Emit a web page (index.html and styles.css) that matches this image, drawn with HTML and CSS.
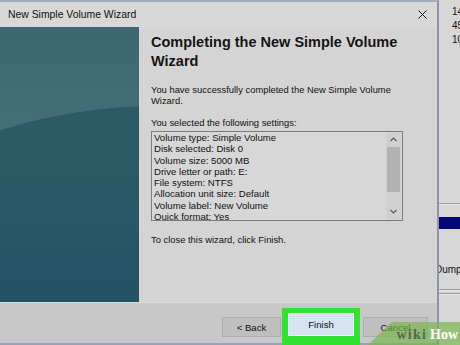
FILE: index.html
```html
<!DOCTYPE html>
<html lang="en">
<head>
  <meta charset="UTF-8" />
  <meta name="viewport" content="width=device-width, initial-scale=1.0" />
  <title>New Simple Volume Wizard</title>
  <link rel="stylesheet" href="styles.css">
</head>
<body>
  <div class="window">
    <div class="titlebar">
      <span>New Simple Volume Wizard</span>
      <svg class="close" width="9" height="9" viewBox="0 0 9 9">
        <path d="M0.5 0.5 L8.5 8.5 M8.5 0.5 L0.5 8.5" stroke="#1a1a1a" stroke-width="1" fill="none" />
      </svg>
    </div>

    <div class="main">
      <div class="side"></div>
      <div class="content">
        <h1>Completing the New Simple Volume Wizard</h1>
        <p>You have successfully completed the New Simple Volume Wizard.</p>
        <p class="label">You selected the following settings:</p>

        <div class="listbox">
          <div class="lines">
            <div>Volume type: Simple Volume</div>
            <div>Disk selected: Disk 0</div>
            <div>Volume size: 5000 MB</div>
            <div>Drive letter or path: E:</div>
            <div>File system: NTFS</div>
            <div>Allocation unit size: Default</div>
            <div>Volume label: New Volume</div>
            <div>Quick format: Yes</div>
          </div>
          <div class="scrollbar">
            <div class="arrow up">
              <svg width="7" height="5" viewBox="0 0 7 5"><path d="M0.5 4 L3.5 1 L6.5 4" stroke="#555" stroke-width="1.1" fill="none" /></svg>
            </div>
            <div class="thumb"></div>
            <div class="track"></div>
            <div class="arrow down">
              <svg width="7" height="5" viewBox="0 0 7 5"><path d="M0.5 1 L3.5 4 L6.5 1" stroke="#555" stroke-width="1.1" fill="none" /></svg>
            </div>
          </div>
        </div>

        <p class="closing">To close this wizard, click Finish.</p>
      </div>
    </div>

    <div class="footer">
      <button class="btn back">&lt; Back</button>
      <div class="highlight">
        <button class="btn finish">Finish</button>
      </div>
      <button class="btn cancel">Cancel</button>
    </div>
  </div>

  <div class="behind">
    <div class="nums">
      <div>14</div>
      <div>45</div>
      <div>10</div>
    </div>
    <div class="rule first"></div>
    <div class="selected"></div>
    <div class="dump">Dump</div>
    <div class="rule second"></div>
    <div class="rule third"></div>
  </div>

  <div class="wikihow"><span class="wiki">wiki</span><span class="how">How</span></div>
</body>
</html>
```

FILE: styles.css
```css
body {
  margin: 0;
  width: 460px;
  height: 345px;
  overflow: hidden;
  display: flex;
  position: relative;
  background-color: #d5d5d5;
  color: #111;
  font-family: 'Liberation Sans', Arial, sans-serif;
}

.window {
  width: 439px;
  flex: none;
  display: flex;
  flex-direction: column;
  box-sizing: border-box;
  border-top: 2px solid #a3acbe;
  border-right: 2px solid #8e97a9;
  border-bottom: 2px solid #9aa3b6;
  background-color: #d4d4d4;
  position: relative;
  z-index: 1;
}

.titlebar {
  height: 25px;
  flex: none;
  display: flex;
  align-items: center;
  justify-content: space-between;
  padding: 0 10px 0 8px;
  font-size: 10.4px;
  background-color: #d8d8d8;
}

.main {
  height: 275px;
  flex: none;
  display: flex;
}

.side {
  width: 139px;
  flex: none;
  background:
    linear-gradient(rgba(0, 0, 0, 0) 45%, rgba(18, 70, 96, 0.35)),
    radial-gradient(ellipse 300px 142px at 170px 220px, #2c5a66 99.5%, rgba(0, 0, 0, 0) 100%),
    linear-gradient(#3c6770, #44707a 45%, #3a666f);
}

.content {
  flex: 1;
  padding: 6px 30px 0 12px;
}

h1 {
  margin: 0;
  font-size: 14.5px;
  line-height: 19px;
  font-weight: bold;
  color: #141414;
}

p {
  margin: 13px 0 0;
  font-size: 9.4px;
  line-height: 11px;
}

.label {
  margin-top: 11px;
}

.listbox {
  margin-top: 3px;
  width: 252px;
  height: 90px;
  box-sizing: border-box;
  border: 1px solid #7d7d7d;
  background-color: #d7d7d7;
  display: flex;
}

.lines {
  flex: 1;
  overflow: hidden;
  padding-left: 2px;
  font-size: 9.6px;
  line-height: 11.3px;
}

.scrollbar {
  width: 15px;
  margin-right: 1px;
  display: flex;
  flex-direction: column;
  align-items: center;
  background-color: #d1d1d1;
}

.arrow {
  width: 100%;
  display: flex;
  align-items: center;
  justify-content: center;
}

.arrow.up {
  height: 15px;
}

.arrow.down {
  height: 17px;
}

.thumb {
  width: 13px;
  height: 45px;
  background-color: #b2b2b2;
}

.track {
  flex: 1;
}

.closing {
  margin-top: 13px;
}

.footer {
  height: 41px;
  flex: none;
  display: flex;
  align-items: flex-start;
  justify-content: flex-end;
  background-color: #c8c8c8;
  box-shadow: inset 0 1px 0 #d9d9d9;
}

.btn {
  margin-top: 15px;
  height: 20px;
  padding: 0;
  font-family: 'Liberation Sans', Arial, sans-serif;
  font-size: 9.6px;
  color: #111;
  background-color: #bfbfbf;
  border: 1px solid #adadad;
}

.back {
  width: 59px;
}

.highlight {
  margin: 6px 0 0 1px;
  width: 78px;
  height: 37px;
  box-sizing: border-box;
  padding: 5px 6px 0;
  background-color: #31e231;
}

.finish {
  margin-top: 0;
  width: 66px;
  height: 23px;
  background-color: #d6e3f3;
  border: 1px solid #eef3fa;
}

.cancel {
  width: 65px;
  margin: 15px 9px 0 3px;
}

.behind {
  flex: 1;
  display: flex;
  flex-direction: column;
  background-color: #d7d7d7;
  font-size: 10px;
}

.nums {
  padding: 5px 0 0 13px;
  line-height: 14px;
}

.rule {
  height: 1px;
  margin-left: -4px;
  background-color: #9e9e9e;
  box-shadow: 0 1px 0 #e6e6e6;
}

.rule.first {
  margin-top: 156px;
}

.selected {
  margin-top: 13px;
  height: 12px;
  background-color: #07077c;
}

.dump {
  margin: 35px 0 0 -4px;
  line-height: 12px;
}

.rule.second {
  margin-top: 13px;
}

.rule.third {
  margin-top: 3px;
}

.wikihow {
  position: absolute;
  right: 0;
  bottom: 0;
  z-index: 2;
  width: 92px;
  height: 23px;
  box-sizing: border-box;
  padding: 0 2px 3px 0;
  display: flex;
  align-items: flex-end;
  justify-content: flex-end;
  background-color: rgba(118, 182, 72, 0.66);
  clip-path: polygon(24px 0, 100% 0, 100% 100%, 0 100%);
  font-family: 'Liberation Serif', 'Times New Roman', serif;
  font-weight: bold;
  font-size: 14px;
  line-height: 14px;
}

.wiki {
  color: #56684f;
  letter-spacing: 1.2px;
  margin-right: 3px;
}

.how {
  color: #fff;
}
```
